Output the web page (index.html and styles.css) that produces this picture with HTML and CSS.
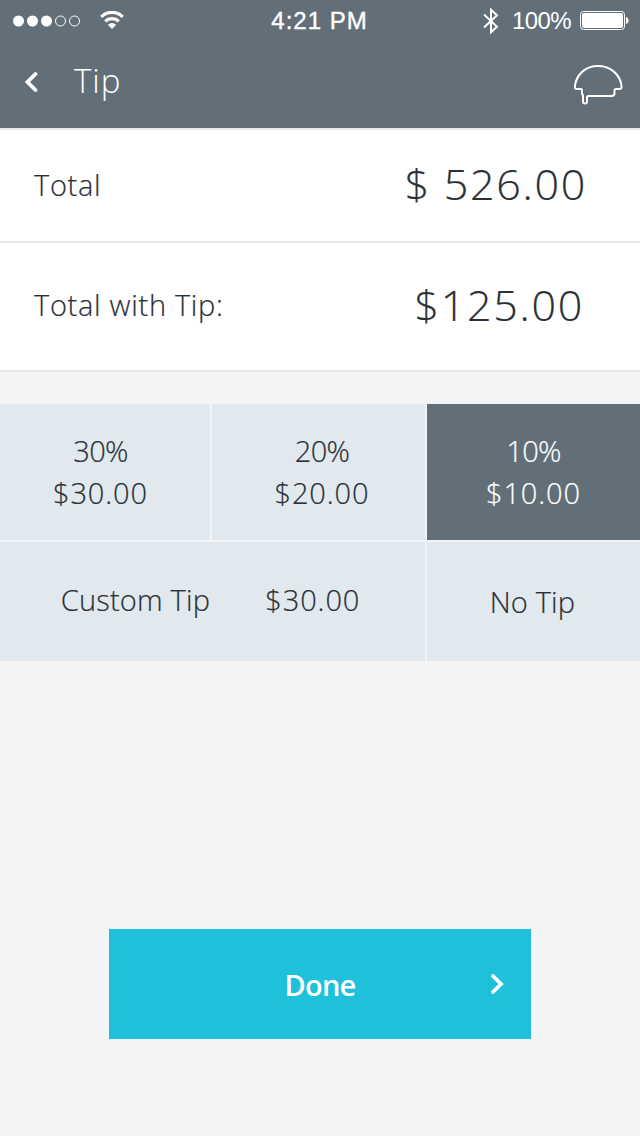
FILE: index.html
```html
<!DOCTYPE html>
<html lang="en">
<head>
    <meta charset="UTF-8">
    <meta name="viewport" content="width=device-width, initial-scale=1.0">
    <title>Tip</title>
    <link rel="stylesheet" href="styles.css">
</head>
<body>
    <header class="header">
        <div class="status-bar">
            <div class="status-left">
                <svg class="signal" width="68" height="12" viewBox="0 0 68 12">
                    <g fill="#fff">
                        <circle cx="5.5" cy="6" r="5.5"/>
                        <circle cx="19.5" cy="6" r="5.5"/>
                        <circle cx="33.5" cy="6" r="5.5"/>
                    </g>
                    <g fill="none" stroke="#fff">
                        <circle cx="47.5" cy="6" r="5"/>
                        <circle cx="61.5" cy="6" r="5"/>
                    </g>
                </svg>
                <svg class="wifi" width="24" height="18" viewBox="0 0 24 18">
                    <g fill="none" stroke="#fff" stroke-width="3.2">
                        <path d="M1.2 5.8a15.3 15.3 0 0 1 21.6 0"/>
                        <path d="M5.3 10.3a9.5 9.5 0 0 1 13.4 0"/>
                    </g>
                    <path d="M12 18l-4.2-4.2a6 6 0 0 1 8.4 0z" fill="#fff"/>
                </svg>
            </div>
            <span class="time">4:21 PM</span>
            <div class="status-right">
                <svg class="bluetooth" width="16" height="28" viewBox="0 0 16 28">
                    <path d="M1 7.5l13 12.3-6 5.5V2.7l6 5.5L1 20.5" fill="none" stroke="#fff" stroke-width="2"/>
                </svg>
                <span class="percent">100%</span>
                <svg class="battery" width="49" height="20" viewBox="0 0 49 20">
                    <rect x=".5" y=".5" width="44" height="18" rx="3" fill="none" stroke="#fff"/>
                    <rect x="2" y="2" width="41" height="15" rx="2" fill="#fff"/>
                    <path d="M46 6c3.5 1 3.5 6 0 7z" fill="#fff"/>
                </svg>
            </div>
        </div>
        <div class="nav-bar">
            <svg class="back" width="14" height="22" viewBox="0 0 14 22">
                <path d="M10.500 3l-8 8 8 8" fill="none" stroke="#fff" stroke-width="3.8" stroke-linecap="round"/>
            </svg>
            <h1 class="title">Tip</h1>
            <svg class="logo" width="50" height="42" viewBox="0 0 50 42">
                <path d="M25 2C12.5 2 3.500 10.500 2 21.500V23.500Q2 25 3.500 25H8Q9 25 9 27V30Q10 30.500 10 32V37.500Q10 39.500 12 39.500T14 37.500V33.500Q14 32 15.500 32H38.500Q41.500 32 41.500 29V26.500Q41.500 25 43 25H46.500Q48.500 25 48.500 23V21.500C47 10.500 37.500 2 25 2Z" fill="none" stroke="#fff" stroke-width="2" stroke-linejoin="round"/>
            </svg>
        </div>
    </header>

    <section class="totals">
        <div class="total-row">
            <span class="label">Total</span>
            <span class="amount">$ 526.00</span>
        </div>
        <div class="total-row with-tip">
            <span class="label">Total with Tip:</span>
            <span class="amount">$125.00</span>
        </div>
    </section>

    <section class="tips">
        <div class="tip first"><span class="rate">30%</span><span>$30.00</span></div>
        <div class="tip second"><span class="rate">20%</span><span>$20.00</span></div>
        <div class="tip active"><span class="rate">10%</span><span>$10.00</span></div>
        <div class="tip custom"><span class="text">Custom Tip</span><span>$30.00</span></div>
        <div class="tip none"><span class="text">No Tip</span></div>
    </section>

    <button class="done">
        <span>Done</span>
        <svg class="next" width="14" height="22" viewBox="0 0 14 22">
            <path d="M3 3l8 8-8 8" fill="none" stroke="#fff" stroke-width="3.8" stroke-linecap="round"/>
        </svg>
    </button>
</body>
</html>
```
FILE: styles.css
```css
* {
    box-sizing: border-box;
}
body {
    margin: 0;
    width: 640px;
    height: 1136px;
    overflow: hidden;
    background-color: #f2f4f6;
    color: #2b3036;
    font-family: "Open Sans", "Noto Sans", sans-serif;
    font-weight: 300;
    font-size: 29px;
}
svg {
    display: block;
    flex: none;
}
.header {
    height: 130px;
    background-color: #626f78;
    border-bottom: 2px solid #e6e7e8;
    color: #fff;
}
.status-bar {
    display: grid;
    grid-template-columns: 1fr auto 1fr;
    align-items: center;
    height: 41px;
    padding: 0 11px 0 13px;
    font-family: "Liberation Sans", Arial, sans-serif;
    font-weight: 400;
    font-size: 24px;
}
.status-left,
.status-right {
    display: flex;
    align-items: center;
}
.status-left {
    gap: 19px;
}
.status-right {
    justify-content: flex-end;
}
.wifi {
    margin-bottom: 1px;
}
.time {
    margin-right: 3px;
    letter-spacing: 1px;
    -webkit-text-stroke: 0.4px #fff;
}
.percent {
    margin: 1px 9px 0 13px;
    letter-spacing: -0.6px;
}
.nav-bar {
    display: flex;
    align-items: center;
    height: 82px;
    padding: 0 17px 0 25px;
}
.title {
    margin: 0 auto 3px 35px;
    font-size: 33px;
    font-weight: 300;
    letter-spacing: 1px;
}
.logo {
    margin-top: 6px;
}
.total-row {
    display: flex;
    align-items: center;
    justify-content: space-between;
    height: 113px;
    padding: 0 53px 2px 34px;
    background-color: #fff;
    border-bottom: 2px solid #e5e7e9;
}
.total-row.with-tip {
    height: 129px;
    padding: 0 56px 5px 34px;
}
.label {
    letter-spacing: 0.7px;
}
.label,
.amount,
.tip {
    -webkit-text-stroke: 0.2px;
}
.amount {
    margin-bottom: 2px;
    font-size: 43px;
    letter-spacing: 1.7px;
}
.with-tip .amount {
    margin-bottom: 0;
}
.tips {
    display: grid;
    grid-template-columns: 210px 213px 213px;
    grid-template-rows: 136px 119px;
    gap: 2px;
    margin-top: 32px;
}
.tip {
    display: flex;
    flex-direction: column;
    align-items: center;
    justify-content: center;
    background-color: #e1e8ee;
    line-height: 42px;
    letter-spacing: 0.9px;
}
.tip.first {
    padding-right: 9px;
}
.tip.second {
    padding-left: 7px;
}
.rate {
    letter-spacing: -0.7px;
}
.tip.active {
    background-color: #626f78;
    color: #fff;
}
.tip.custom {
    grid-column: span 2;
    flex-direction: row;
    gap: 55px;
    padding: 0 4px 3px 0;
}
.tip.none {
    padding-right: 2px;
}
.text {
    letter-spacing: 0.2px;
}
.done {
    display: grid;
    grid-template-columns: 1fr auto 1fr;
    align-items: center;
    width: 422px;
    height: 110px;
    margin: 268px auto 0;
    padding: 0 27px;
    border: none;
    background-color: #1fc0da;
    color: #fff;
    font-family: inherit;
    font-size: 29px;
    font-weight: 600;
}
.done span {
    grid-column: 2;
    letter-spacing: -0.8px;
}
.next {
    justify-self: end;
}
```
